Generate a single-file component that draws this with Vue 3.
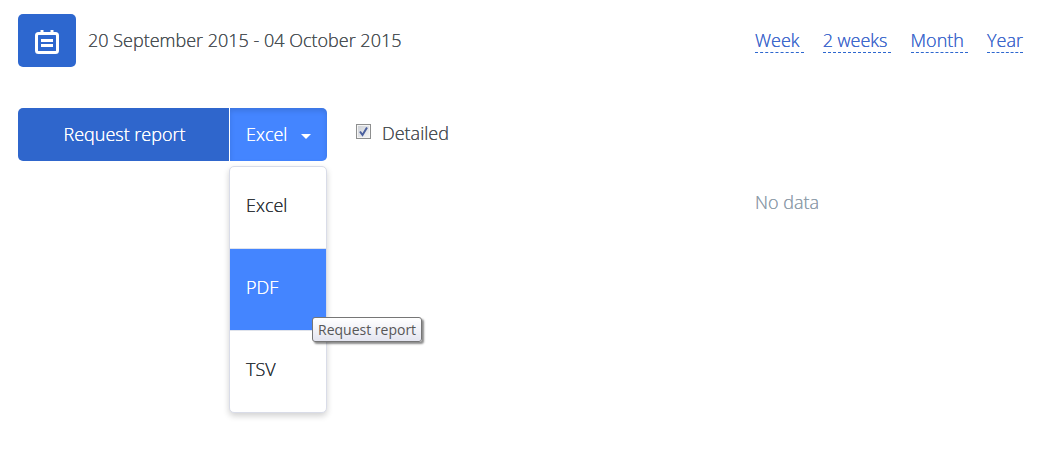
<script setup>
import { ref } from 'vue'

const periods = ['Week', '2 weeks', 'Month', 'Year']
const formats = ['Excel', 'PDF', 'TSV']
const selected = ref('Excel')
const active = ref('PDF')
const open = ref(true)
const detailed = ref(true)

function choose(format) {
  selected.value = format
  open.value = false
}
</script>

<template>
  <main class="page">
    <section class="main">
      <div class="range">
        <button class="calendar" type="button" aria-label="Choose dates">
          <svg width="24" height="24" viewBox="0 0 24 24" fill="none" stroke="#fff" aria-hidden="true">
            <rect x="1.5" y="3.5" width="21" height="19" rx="2" stroke-width="3" />
            <path d="M7 0v4M17 0v4" stroke-width="3" />
            <path d="M6 10.5h12M6 15.5h12" stroke-width="3" />
          </svg>
        </button>
        <span class="dates">20 September 2015 - 04 October 2015</span>
      </div>

      <div class="actions">
        <button class="request" type="button">Request report</button>
        <div class="format">
          <button class="toggle" type="button" aria-haspopup="menu" :aria-expanded="open" @click="open = !open">
            {{ selected }}
            <span class="caret"></span>
          </button>
          <ul v-if="open" class="menu" role="menu">
            <li v-for="format in formats" :key="format" role="none">
              <button
                class="option"
                :class="{ active: format === active }"
                type="button"
                role="menuitem"
                @mouseenter="active = format"
                @click="choose(format)"
              >{{ format }}</button>
            </li>
          </ul>
          <span v-if="open" class="tooltip" role="tooltip">Request report</span>
        </div>
        <label class="detailed">
          <span class="check">
            <input v-model="detailed" type="checkbox" />
            <svg v-if="detailed" width="11" height="11" viewBox="0 0 11 11" aria-hidden="true">
              <path d="M2 5.5L4.5 9L9 1.5" fill="none" stroke="#4a5f9e" stroke-width="2" />
            </svg>
          </span>
          Detailed
        </label>
      </div>
    </section>

    <aside class="side">
      <nav class="periods">
        <a v-for="period in periods" :key="period" href="#">{{ period }}</a>
      </nav>
      <p class="empty">No data</p>
    </aside>
  </main>
</template>

<style>
body {
  background: #fff;
}
</style>

<style scoped>
.page {
  display: flex;
  justify-content: space-between;
  box-sizing: border-box;
  min-height: 100vh;
  padding: 14px 14px 14px 18px;
  font-family: "Open Sans", sans-serif;
  font-size: 18px;
  font-weight: 300;
  line-height: 24px;
  color: #4a5054;
  text-shadow: 0 0 0 currentColor;
}

button {
  margin: 0;
  padding: 0;
  border: 0;
  font: inherit;
  text-shadow: 0 0 0 currentColor;
  cursor: pointer;
}

.range {
  display: flex;
  align-items: center;
  gap: 12px;
  height: 53px;
}

.dates {
  padding-bottom: 2px;
}

.calendar {
  display: flex;
  align-items: center;
  justify-content: center;
  width: 58px;
  height: 53px;
  padding-top: 3px;
  border-radius: 5px;
  background: #2d67cf;
}

.actions {
  display: flex;
  margin-top: 41px;
  height: 53px;
}

.request {
  width: 211px;
  padding: 0 0 2px 2px;
  border-radius: 5px 0 0 5px;
  background: #2f66cc;
  color: #fff;
}

.format {
  position: relative;
  width: 98px;
}

.toggle {
  display: flex;
  align-items: center;
  justify-content: space-between;
  width: 100%;
  height: 100%;
  padding: 0 16px 2px;
  border-left: 1px solid #fff;
  border-radius: 0 5px 5px 0;
  background: #4485ff;
  box-shadow: inset 0 3px 5px rgba(0, 0, 0, 0.12);
  color: #fff;
}

.caret {
  margin-top: 6px;
  border: 5px solid transparent;
  border-top-color: #fff;
  border-bottom: 0;
}

.menu {
  position: absolute;
  top: 58px;
  left: 0;
  box-sizing: border-box;
  width: 100%;
  margin: 0;
  padding: 0;
  border: 1px solid #d9dce8;
  border-radius: 5px;
  background: #fff;
  box-shadow: 0 3px 6px rgba(0, 0, 0, 0.18);
  list-style: none;
}

.menu li + li {
  border-top: 1px solid #dfe3ec;
}

.option {
  display: block;
  width: 100%;
  height: 81px;
  padding: 0 16px 6px;
  background: none;
  color: #2e3338;
  text-align: left;
}

.option.active {
  background: #4485ff;
  color: #fff;
}

.tooltip {
  position: absolute;
  top: 209px;
  left: 83px;
  box-sizing: border-box;
  height: 25px;
  padding: 0 5px;
  border: 1px solid #767676;
  border-radius: 3px;
  background: linear-gradient(#fff, #e4e5f0);
  box-shadow: 2px 2px 2px rgba(0, 0, 0, 0.45);
  color: #575757;
  font-size: 14px;
  font-weight: 400;
  line-height: 23px;
  text-shadow: none;
  white-space: nowrap;
}

.detailed {
  display: flex;
  align-items: center;
  gap: 11px;
  margin-left: 29px;
  padding-bottom: 3px;
}

.check {
  display: grid;
  place-items: center;
  margin-bottom: 3px;
}

.check > * {
  grid-area: 1 / 1;
}

.check input {
  appearance: none;
  box-sizing: border-box;
  width: 15px;
  height: 15px;
  margin: 0;
  border: 1px solid #8e8f8f;
  background: linear-gradient(135deg, #cbcfd5, #f6f6f6);
  box-shadow: inset 0 0 0 1px #f4f4f4;
}

.check svg {
  pointer-events: none;
}

.side {
  width: 268px;
}

.periods {
  display: flex;
  justify-content: space-between;
  margin-top: 14px;
}

.periods a {
  padding-right: 4px;
  border-bottom: 1px dashed #2d67cf;
  color: #3d68cc;
  text-decoration: none;
  text-shadow: 0 0 0 currentColor;
}

.periods a:last-child {
  padding-right: 0;
}

.empty {
  margin: 137px 0 0;
  color: #8f9daa;
  text-shadow: 0 0 0 currentColor;
}
</style>
